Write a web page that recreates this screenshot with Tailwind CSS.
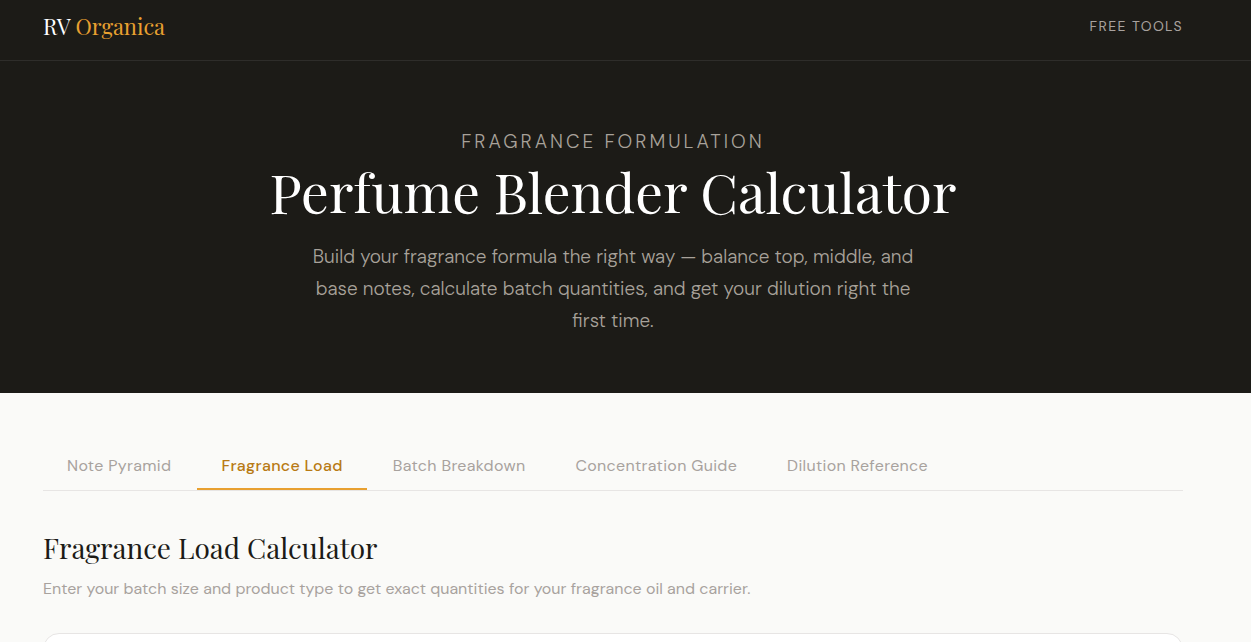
<!DOCTYPE html>
<html lang="en">
<head>
<meta charset="utf-8">
<meta name="viewport" content="width=device-width, initial-scale=1">
<title>Perfume Blender Calculator</title>
<script src="https://cdn.jsdelivr.net/npm/@tailwindcss/browser@4"></script>
</head>
<body class="min-h-screen overflow-x-hidden bg-[#fafaf8] font-['DM_Sans','Inter',sans-serif]">
<header class="border-b border-[#2e2d2a] bg-[#1c1b17] pr-[25px]">
  <div class="mx-auto flex h-[60px] max-w-[1140px] items-center justify-between pb-2">
    <a href="#" class="font-['Playfair_Display','Liberation_Serif',serif] text-[22px] text-white">RV <span class="text-[#e8a030]">Organica</span></a>
    <a href="#" class="text-sm tracking-widest text-[#a8a29e] uppercase">Free Tools</a>
  </div>
</header>
<section class="bg-[#1c1b17] pt-[65px] pr-[25px] pb-14 text-center text-[#a8a29a]">
  <p class="text-[19px] leading-8 font-light tracking-[3px] uppercase">Fragrance Formulation</p>
  <h1 class="font-['Playfair_Display','Liberation_Serif',serif] text-[55px] leading-[66px] text-white">Perfume Blender Calculator</h1>
  <p class="mx-auto mt-[17px] max-w-[625px] text-[19px] leading-8 font-light">Build your fragrance formula the right way — balance top, middle, and base notes, calculate batch quantities, and get your dilution right the first time.</p>
</section>
<main class="pt-12 pr-[25px]">
  <div class="mx-auto max-w-[1140px]">
    <div role="tablist" class="flex gap-0.5 border-b border-[#e7e5e4] text-base tracking-[0.02em] text-[#a8a29e]">
      <button role="tab" class="border-b-2 border-transparent px-6 pt-[13px] pb-2.5">Note Pyramid</button>
      <button role="tab" aria-selected="true" class="border-b-2 border-[#e8a030] px-6 pt-[13px] pb-2.5 font-medium text-[#b87a14]">Fragrance Load</button>
      <button role="tab" class="border-b-2 border-transparent px-6 pt-[13px] pb-2.5">Batch Breakdown</button>
      <button role="tab" class="border-b-2 border-transparent px-6 pt-[13px] pb-2.5">Concentration Guide</button>
      <button role="tab" class="border-b-2 border-transparent px-6 pt-[13px] pb-2.5">Dilution Reference</button>
    </div>
    <h2 class="mt-[39px] font-['Playfair_Display','Liberation_Serif',serif] text-[28px] leading-9 text-[#1c1b17]">Fragrance Load Calculator</h2>
    <p class="mt-[11px] text-base leading-6 text-[#a8a29e]">Enter your batch size and product type to get exact quantities for your fragrance oil and carrier.</p>
    <div class="mt-8 h-20 rounded-2xl border border-[#e7e5e4] bg-white"></div>
  </div>
</main>
</body>
</html>
